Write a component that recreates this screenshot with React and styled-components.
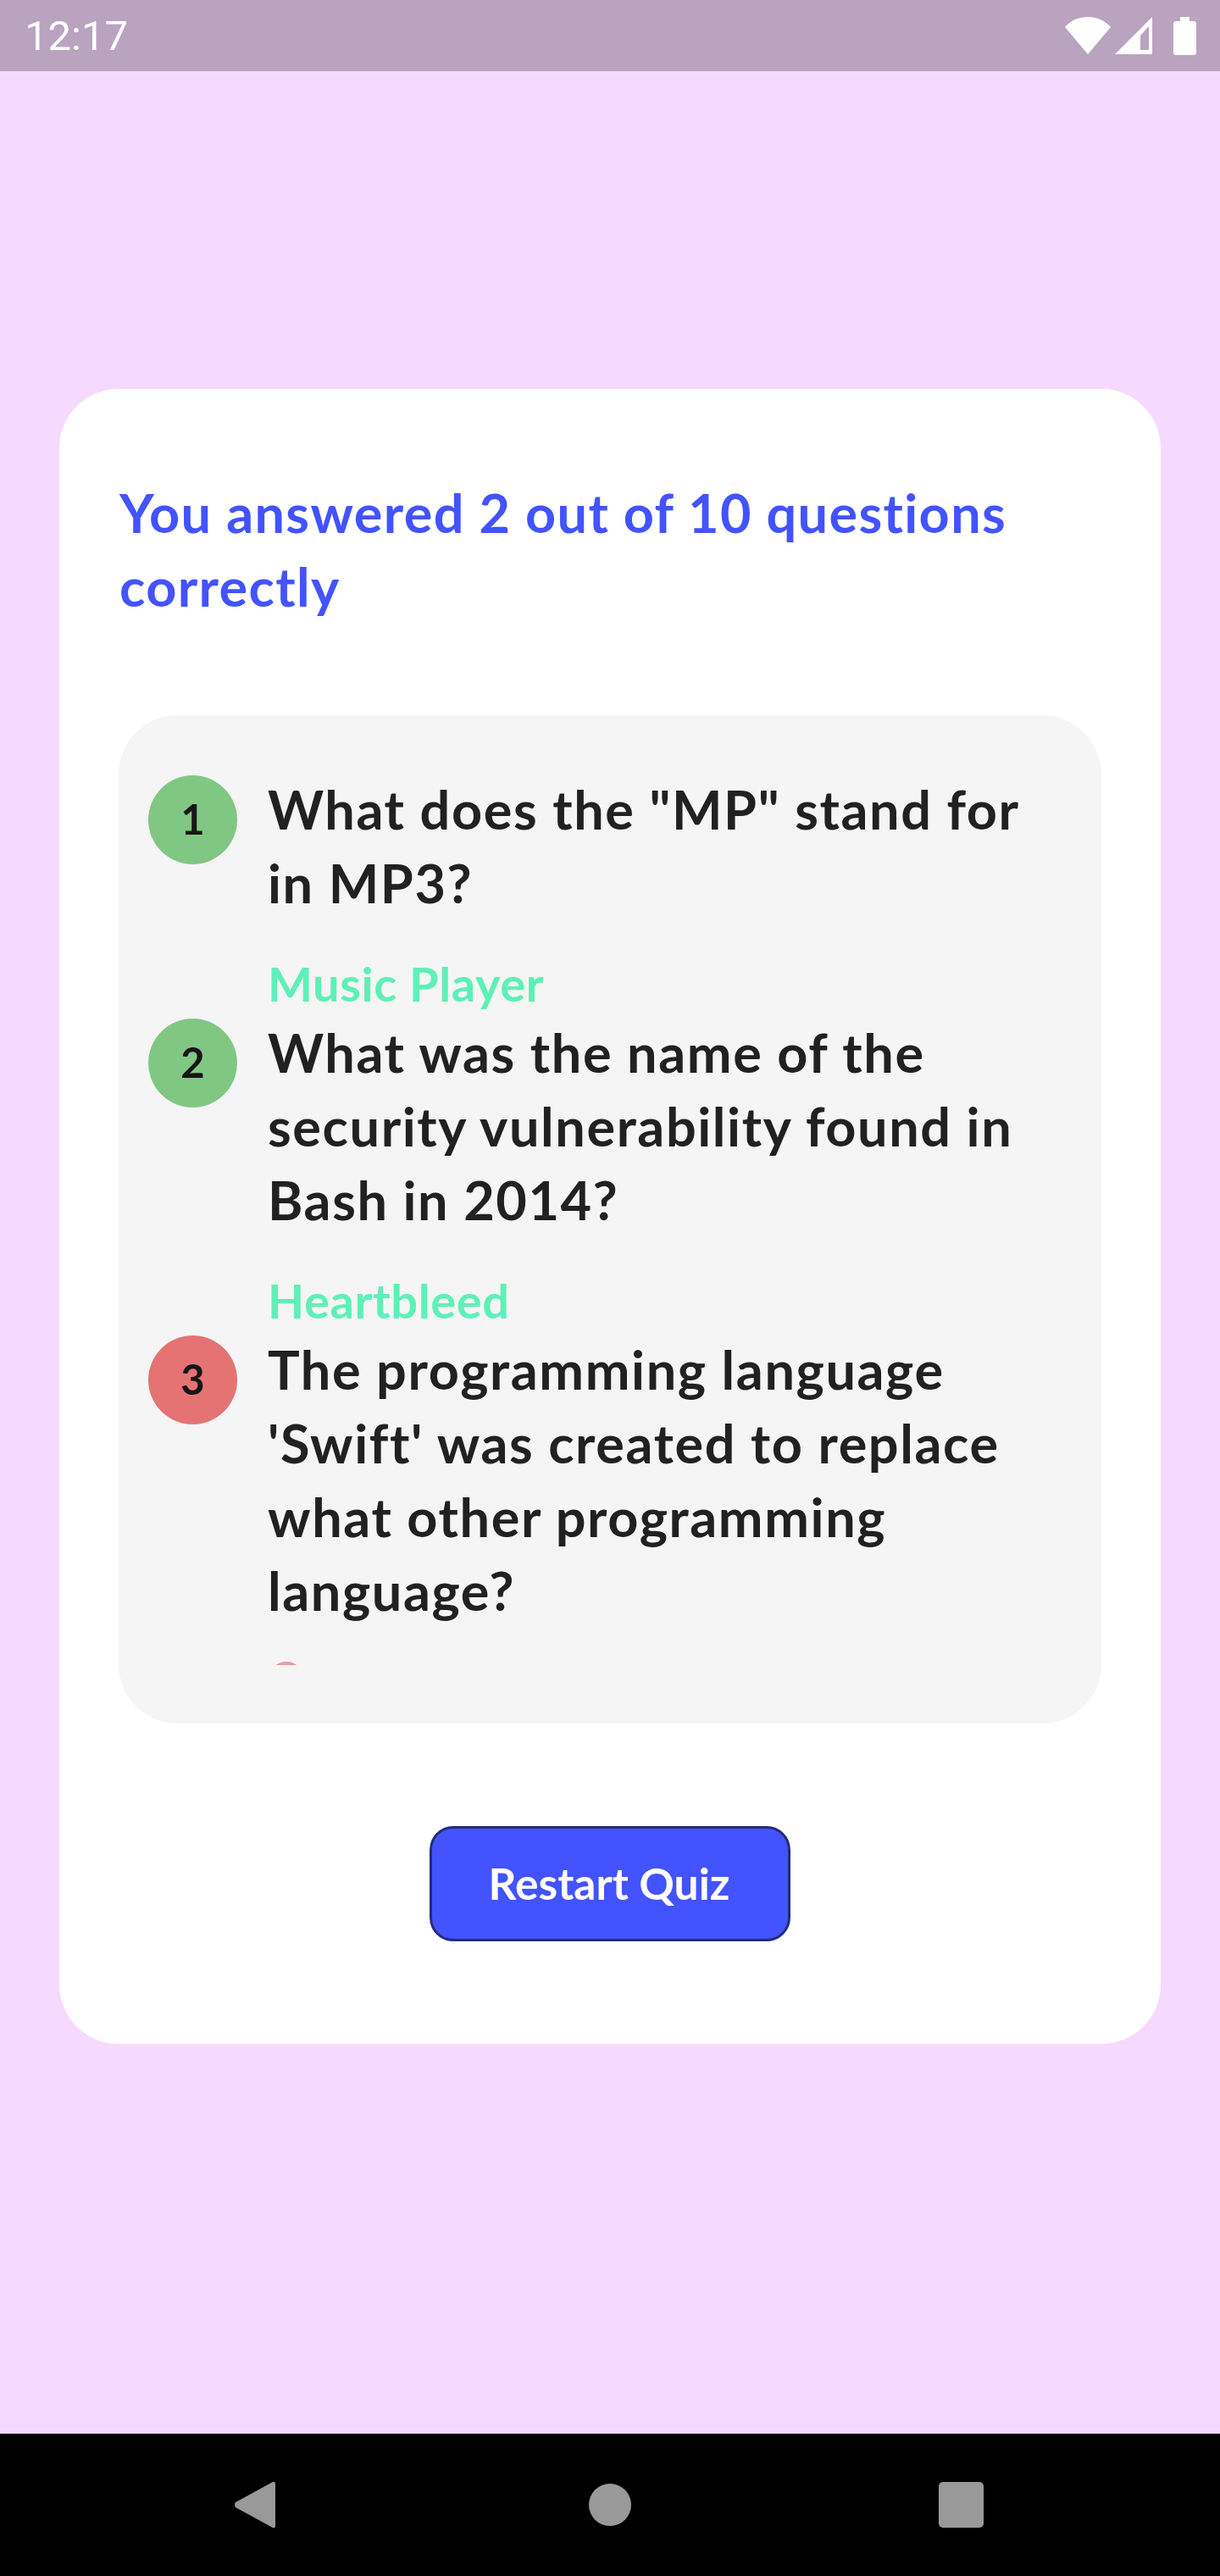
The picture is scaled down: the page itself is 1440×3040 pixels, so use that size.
import React from 'react';
import styled, { createGlobalStyle } from 'styled-components';

const GlobalStyle = createGlobalStyle`
  html, body { margin: 0; padding: 0; }
  body { font-family: "Lato", "Noto Sans", sans-serif; background: #f6d9ff; }
`;

const Screen = styled.div`
  width: 1440px;
  height: 3040px;
  display: flex;
  flex-direction: column;
  background: #f6d9ff;
`;

const StatusBar = styled.div`
  height: 84px;
  flex: none;
  display: flex;
  align-items: center;
  justify-content: space-between;
  padding: 0 28px 0 29px;
  box-sizing: border-box;
  background: #b9a3bf;
`;

const Clock = styled.span`
  font-family: "Roboto", sans-serif;
  font-size: 49px;
  color: #fff;
`;

const StatusIcons = styled.div`
  display: flex;
  align-items: center;
  gap: 5px;
`;

const Main = styled.main`
  flex: 1;
  padding: 375px 70px 0;
`;

const Card = styled.section`
  height: 1953px;
  box-sizing: border-box;
  padding: 102px 70px 0;
  border-radius: 70px;
  background: #fff;
`;

const Score = styled.h1`
  margin: 0 0 109px 1px;
  font-size: 63px;
  line-height: 87px;
  font-weight: 700;
  letter-spacing: 1.35px;
  color: #4353ff;
`;

const ResultsBox = styled.div`
  height: 1190px;
  box-sizing: border-box;
  padding: 71px 55px 69px 35px;
  border-radius: 70px;
  background: #f5f5f5;
`;

const ResultsList = styled.div`
  height: 1050px;
  overflow: hidden;
`;

const Row = styled.div`
  display: flex;
  gap: 36px;
`;

const Badge = styled.div`
  flex: none;
  width: 105px;
  height: 105px;
  box-sizing: border-box;
  padding-bottom: 4px;
  border-radius: 50%;
  display: flex;
  align-items: center;
  justify-content: center;
  font-size: 49px;
  font-weight: 700;
  color: #161616;
  background: ${(p) => (p.$correct ? '#81c784' : '#e57373')};
`;

const Body = styled.div`
  flex: 1;
  margin-top: -4px;
  padding-bottom: 3px;
`;

const Question = styled.div`
  font-size: 63px;
  line-height: 87px;
  font-weight: 700;
  letter-spacing: 1.6px;
  color: #212121;
`;

const Answer = styled.div`
  margin-top: ${(p) => (p.$correct ? '37px' : '21px')};
  font-size: 56px;
  line-height: 77px;
  font-weight: 700;
  letter-spacing: 0.6px;
  color: ${(p) => (p.$correct ? '#5ef0b8' : '#ef9a9a')};
`;

const Actions = styled.div`
  display: flex;
  justify-content: center;
  padding-top: 121px;
`;

const RestartButton = styled.button`
  width: 426px;
  height: 136px;
  box-sizing: border-box;
  border: 3px solid #232c7c;
  border-radius: 28px;
  padding: 0 2px 2px 0;
  background: #4353ff;
  color: #fff;
  font-family: inherit;
  font-size: 51.5px;
  font-weight: 700;
`;

const NavBar = styled.nav`
  height: 168px;
  flex: none;
  display: flex;
  align-items: center;
  justify-content: center;
  gap: 363px;
  padding-right: 3px;
  background: #000;
`;

const BackIcon = styled.svg`
  margin-right: 7px;
`;

const BatteryIcon = styled.svg`
  margin-left: 20px;
`;

const results = [
  { q: 'What does the "MP" stand for in MP3?', a: 'Music Player', ok: true },
  { q: 'What was the name of the security vulnerability found in Bash in 2014?', a: 'Heartbleed', ok: true },
  { q: "The programming language 'Swift' was created to replace what other programming language?", a: 'C++', ok: false },
];

export default function App() {
  return (
    <Screen>
      <GlobalStyle />
      <StatusBar>
        <Clock>12:17</Clock>
        <StatusIcons>
          <svg width="54" height="44" viewBox="0 0 54 44">
            <path d="M27 44 L0 12 C7 4 16 0 27 0 C38 0 47 4 54 12 Z" fill="#fff" />
          </svg>
          <svg width="44" height="44" viewBox="0 0 44 44">
            <path d="M44 0 V44 H0 Z" fill="#fff" />
            <path d="M40 11 V39 H30 V22 Z" fill="#b9a3bf" />
          </svg>
          <BatteryIcon width="27" height="45" viewBox="0 0 27 45">
            <path d="M8 0 H19 V5 H24 Q27 5 27 8 V42 Q27 45 24 45 H3 Q0 45 0 42 V8 Q0 5 3 5 H8 Z" fill="#fff" />
          </BatteryIcon>
        </StatusIcons>
      </StatusBar>
      <Main>
        <Card>
          <Score>You answered 2 out of 10 questions correctly</Score>
          <ResultsBox>
            <ResultsList>
              {results.map((r, i) => (
                <Row key={r.a}>
                  <Badge $correct={r.ok}>{i + 1}</Badge>
                  <Body>
                    <Question>{r.q}</Question>
                    <Answer $correct={r.ok}>{r.a}</Answer>
                  </Body>
                </Row>
              ))}
            </ResultsList>
          </ResultsBox>
          <Actions>
            <RestartButton>Restart Quiz</RestartButton>
          </Actions>
        </Card>
      </Main>
      <NavBar>
        <BackIcon width="49" height="56" viewBox="0 0 49 56">
          <path d="M46 1 Q49 0 49 4 V52 Q49 56 46 55 L2 31 Q0 28 2 25 Z" fill="#999" />
        </BackIcon>
        <svg width="50" height="50" viewBox="0 0 50 50">
          <circle cx="25" cy="25" r="25" fill="#999" />
        </svg>
        <svg width="53" height="54" viewBox="0 0 53 54">
          <rect width="53" height="54" rx="5" fill="#999" />
        </svg>
      </NavBar>
    </Screen>
  );
}
